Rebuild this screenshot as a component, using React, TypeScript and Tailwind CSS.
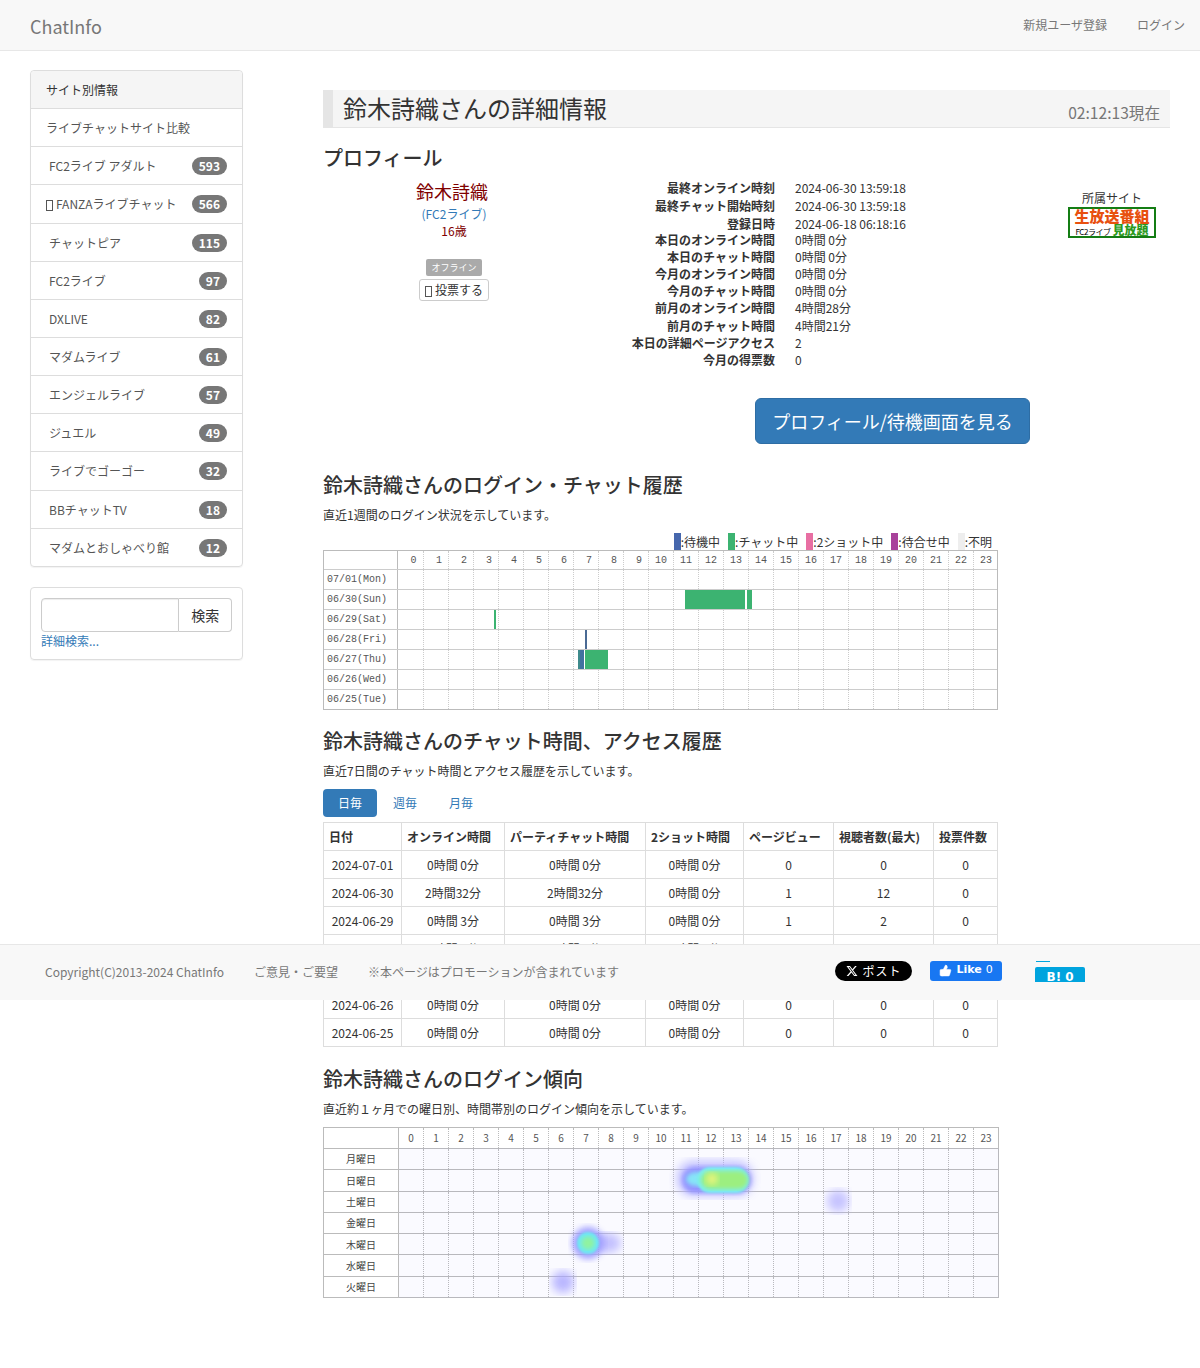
import { FC } from "react";
import { ThumbsUp } from "lucide-react";

const sites = [
  { name: "FC2ライブ アダルト", count: 593, rowClass: "h-[38px] pl-[18px]" },
  { name: "FANZAライブチャット", count: 566, tofu: true, rowClass: "h-[39px] pl-[15px]" },
  { name: "チャットピア", count: 115, rowClass: "h-[38px] pl-[18px]" },
  { name: "FC2ライブ", count: 97, rowClass: "h-[38px] pl-[18px]" },
  { name: "DXLIVE", count: 82, rowClass: "h-[38px] pl-[18px]" },
  { name: "マダムライブ", count: 61, rowClass: "h-[38px] pl-[18px]" },
  { name: "エンジェルライブ", count: 57, rowClass: "h-[38px] pl-[18px]" },
  { name: "ジュエル", count: 49, rowClass: "h-[38px] pl-[18px]" },
  { name: "ライブでゴーゴー", count: 32, rowClass: "h-[39px] pl-[18px]" },
  { name: "BBチャットTV", count: 18, rowClass: "h-[38px] pl-[18px]" },
  { name: "マダムとおしゃべり館", count: 12, rowClass: "h-[37px] pl-[18px]" },
];

const profileRows = [
  ["最終オンライン時刻", "2024-06-30 13:59:18", "h-[18px]"],
  ["最終チャット開始時刻", "2024-06-30 13:59:18", "h-[18px]"],
  ["登録日時", "2024-06-18 06:18:16", "h-[16px]"],
  ["本日のオンライン時間", "0時間 0分", "h-[17px]"],
  ["本日のチャット時間", "0時間 0分", "h-[17px]"],
  ["今月のオンライン時間", "0時間 0分", "h-[17px]"],
  ["今月のチャット時間", "0時間 0分", "h-[17px]"],
  ["前月のオンライン時間", "4時間28分", "h-[18px]"],
  ["前月のチャット時間", "4時間21分", "h-[17px]"],
  ["本日の詳細ページアクセス", "2", "h-[17px]"],
  ["今月の得票数", "0", "h-[17px]"],
];

const hours = Array.from({ length: 24 }, (_, i) => i);

type Bar = { left: number; width: number; color: string };

const historyRows: { label: string; bars: Bar[] }[] = [
  { label: "07/01(Mon)", bars: [] },
  {
    label: "06/30(Sun)",
    bars: [
      { left: 287, width: 60, color: "#3cb371" },
      { left: 349, width: 5, color: "#3cb371" },
    ],
  },
  { label: "06/29(Sat)", bars: [{ left: 96, width: 2, color: "#3cb371" }] },
  { label: "06/28(Fri)", bars: [{ left: 187, width: 2, color: "#4a6a94" }] },
  {
    label: "06/27(Thu)",
    bars: [
      { left: 180, width: 2, color: "#3e8a8c" },
      { left: 182, width: 4, color: "#41719f" },
      { left: 187, width: 23, color: "#3cb371" },
    ],
  },
  { label: "06/26(Wed)", bars: [] },
  { label: "06/25(Tue)", bars: [] },
];

const legend = [
  { label: ":待機中", color: "bg-[#4667ad]" },
  { label: ":チャット中", color: "bg-[#3cb371]" },
  { label: ":2ショット中", color: "bg-[#e86fa3]" },
  { label: ":待合せ中", color: "bg-[#a8429a]" },
  { label: ":不明", color: "bg-[#eeeeee]" },
];

const stats = [
  ["2024-07-01", "0時間 0分", "0時間 0分", "0時間 0分", "0", "0", "0"],
  ["2024-06-30", "2時間32分", "2時間32分", "0時間 0分", "1", "12", "0"],
  ["2024-06-29", "0時間 3分", "0時間 3分", "0時間 0分", "1", "2", "0"],
  ["2024-06-28", "0時間 1分", "0時間 0分", "0時間 0分", "0", "0", "0"],
  ["2024-06-27", "0時間 46分", "0時間 37分", "0時間 0分", "1", "3", "0"],
  ["2024-06-26", "0時間 0分", "0時間 0分", "0時間 0分", "0", "0", "0"],
  ["2024-06-25", "0時間 0分", "0時間 0分", "0時間 0分", "0", "0", "0"],
];

const statHead = ["日付", "オンライン時間", "パーティチャット時間", "2ショット時間", "ページビュー", "視聴者数(最大)", "投票件数"];
const statCols = ["w-[78px]", "w-[103px]", "w-[141px]", "w-[98px]", "w-[90px]", "w-[100px]", "w-[64px]"];

const weekdays = ["月曜日", "日曜日", "土曜日", "金曜日", "木曜日", "水曜日", "火曜日"];

const Tofu: FC<{ className?: string }> = ({ className }) => (
  <span className={`inline-block w-[7px] h-[11px] border border-[#555] align-[-2px] ${className ?? ""}`} />
);

const Sidebar: FC = () => (
  <aside className="w-[213px] shrink-0">
    <div className="border border-[#ddd] rounded shadow-[0_1px_1px_rgba(0,0,0,0.05)]">
      <div className="h-[38px] flex items-center px-[15px] bg-[#f5f5f5] text-[#333] rounded-t border-b border-[#ddd]">
        サイト別情報
      </div>
      <div className="h-[38px] flex items-center pl-[15px] text-[#555] border-b border-[#ddd]">ライブチャットサイト比較</div>
      {sites.map((s, i) => (
        <div
          key={s.name}
          className={`flex items-center justify-between pr-[15px] text-[#555] ${s.rowClass} ${
            i < sites.length - 1 ? "border-b border-[#ddd]" : ""
          }`}
        >
          <span>
            {s.tofu && <Tofu className="mr-[3px]" />}
            {s.name}
          </span>
          <span className="bg-[#777] text-white font-bold rounded-[10px] px-[7px] h-[18px] leading-[18px]">{s.count}</span>
        </div>
      ))}
    </div>
    <div className="mt-5 h-[73px] border border-[#ddd] rounded px-[10px] pt-[10px] shadow-[0_1px_1px_rgba(0,0,0,0.05)]">
      <div className="flex h-[34px]">
        <input className="w-[139px] border border-[#ccc] rounded-l shadow-[inset_0_1px_1px_rgba(0,0,0,0.075)]" />
        <button className="w-[53px] border border-l-0 border-[#ccc] rounded-r text-sm text-[#333]">検索</button>
      </div>
      <a className="block mt-[1px] text-[#337ab7]">詳細検索...</a>
    </div>
  </aside>
);

const Heading: FC<{ title: string; className?: string }> = ({ title, className }) => (
  <h3 className={`text-[20px] leading-[22px] font-medium text-[#333] ${className ?? ""}`}>{title}</h3>
);

const Profile: FC = () => (
  <div className="flex h-[221px] mt-[8px]">
    <div className="w-[262px] shrink-0 flex flex-col items-center pt-[1px]">
      <div className="text-[18px] leading-[26px] text-[#800000] -ml-[4px]">鈴木詩織</div>
      <div className="mt-[1px] leading-[17px] text-[#337ab7]">(FC2ライブ)</div>
      <div className="leading-[17px] text-[#800000]">16歳</div>
      <span className="mt-[20px] h-[17px] w-[56px] rounded-[2px] bg-[#aaa] text-white text-[9px] leading-[17px] text-center">オフライン</span>
      <button className="mt-[3px] w-[70px] h-[22px] border border-[#ccc] rounded-[3px] text-[#333]">
        <Tofu className="mr-[3px]" />
        投票する
      </button>
    </div>
    <div className="w-[190px] shrink-0 pt-[3px]">
      {profileRows.map(([k, , h]) => (
        <div key={k} className={`text-right font-bold text-[#333] whitespace-nowrap ${h}`}>
          {k}
        </div>
      ))}
    </div>
    <div className="w-[293px] shrink-0 pl-[20px] pt-[3px] text-[#333]">
      {profileRows.map(([k, v, h]) => (
        <div key={k} className={h}>
          {v}
        </div>
      ))}
    </div>
    <div className="w-[88px] pt-[12px] text-center">
      <div className="leading-[18px] text-[#333]">所属サイト</div>
      <div className="h-[31px] border-2 border-[#147d14] flex flex-col items-center justify-center bg-white">
        <div className="text-[15px] leading-[16px] font-black text-[#e8500f]">生放送番組</div>
        <div className="flex items-baseline leading-[11px]">
          <span className="text-[8px] text-black tracking-[-0.5px] mr-[2px]">FC2ライブ</span>
          <span className="text-[12px] font-black text-[#2d9a1e]">見放題</span>
        </div>
      </div>
    </div>
  </div>
);

const HistoryChart: FC = () => (
  <div className="w-[675px] border border-[#bbb] font-['Liberation_Mono',monospace] text-[10px] text-[#555]">
    <div className="flex h-[18px]">
      <div className="w-[74px] shrink-0 border-r border-[#bbb]" />
      {hours.map((h) => (
        <div key={h} className={`w-[25px] shrink-0 text-center leading-[20px] ${h ? "border-l border-dotted border-[#ccc]" : ""}`}>
          {h < 10 ? `\u00a0${h}` : h}
        </div>
      ))}
    </div>
    {historyRows.map((r) => (
      <div key={r.label} className="flex h-5 border-t border-[#ccc]">
        <div className="w-[74px] shrink-0 pl-[3px] leading-[19px] border-r border-[#bbb]">{r.label}</div>
        <div className="relative flex flex-1">
          {hours.map((h) => (
            <div key={h} className={`w-[25px] shrink-0 ${h ? "border-l border-dotted border-[#ccc]" : ""}`} />
          ))}
          {r.bars.map((b) => (
            <div key={b.left} className="absolute top-0 bottom-0" style={{ left: b.left, width: b.width, background: b.color }} />
          ))}
        </div>
      </div>
    ))}
  </div>
);

const StatsTable: FC = () => (
  <table className="w-[674px] table-fixed border-collapse text-[#333]">
    <colgroup>
      {statCols.map((c) => (
        <col key={c} className={c} />
      ))}
    </colgroup>
    <thead>
      <tr className="h-[28px]">
        {statHead.map((h) => (
          <th key={h} className="border border-[#ddd] px-[5px] font-bold text-left whitespace-nowrap">
            {h}
          </th>
        ))}
      </tr>
    </thead>
    <tbody>
      {stats.map((row) => (
        <tr key={row[0]} className="h-[28px]">
          {row.map((c, i) => (
            <td key={i} className="border border-[#ddd] text-center">
              {c}
            </td>
          ))}
        </tr>
      ))}
    </tbody>
  </table>
);

const TrendChart: FC = () => (
  <div className="w-[676px] h-[171px] flex flex-col border border-[#bbb] text-[10px] text-[#555]">
    <div className="flex h-5 shrink-0">
      <div className="w-[75px] shrink-0 border-r border-[#bbb]" />
      {hours.map((h) => (
        <div
          key={h}
          className={`shrink-0 text-center leading-[20px] ${h ? "w-[25px] border-l border-dotted border-[#bbb]" : "w-[24px]"}`}
        >
          {h}
        </div>
      ))}
    </div>
    <div className="relative flex-1 flex flex-col">
      {weekdays.map((d) => (
        <div key={d} className="flex-1 flex border-t border-[#bbb]">
          <div className="w-[75px] shrink-0 flex items-center justify-center border-r border-[#bbb] text-[#444]">{d}</div>
          {hours.map((h) => (
            <div key={h} className={`shrink-0 ${h ? "w-[25px] border-l border-dotted border-[#bbb]" : "w-[24px]"}`} />
          ))}
        </div>
      ))}
      {/* heat blobs over the grid */}
      <svg className="absolute left-[75px] top-0 pointer-events-none" width="600" height="150" viewBox="0 0 600 150">
        <defs>
          <filter id="b1"><feGaussianBlur stdDeviation="1.2" /></filter>
          <filter id="b2"><feGaussianBlur stdDeviation="2" /></filter>
          <filter id="b3"><feGaussianBlur stdDeviation="3" /></filter>
          <filter id="b5"><feGaussianBlur stdDeviation="5" /></filter>
        </defs>
        <rect x="0" y="0" width="600" height="150" fill="#7070ff" opacity="0.035" />
        {/* 日曜 11-13 */}
        <rect x="278" y="13" width="76" height="35" rx="16" fill="#b4b2ff" opacity="0.8" filter="url(#b5)" />
        <rect x="283" y="19" width="69" height="26" rx="13" fill="#8c8cff" opacity="0.85" filter="url(#b2)" />
        <ellipse cx="298" cy="31" rx="11" ry="7" fill="#86e4f8" filter="url(#b2)" />
        <rect x="298" y="19" width="52" height="26" rx="13" fill="#7ceef0" filter="url(#b1)" />
        <rect x="302" y="23" width="47" height="18" rx="9" fill="#9cef80" filter="url(#b2)" />
        <circle cx="313" cy="31" r="6" fill="#e6f47c" filter="url(#b3)" />
        {/* 土曜 17 */}
        <circle cx="439" cy="53" r="11" fill="#b4b0ff" opacity="0.75" filter="url(#b5)" />
        {/* 木曜 7-8 */}
        <ellipse cx="208" cy="95" rx="14" ry="10" fill="#b4b0ff" opacity="0.8" filter="url(#b5)" />
        <circle cx="189" cy="95" r="16" fill="#9a98ff" opacity="0.9" filter="url(#b3)" />
        <circle cx="189" cy="95" r="11" fill="#70e8f0" filter="url(#b1)" />
        <circle cx="189" cy="95" r="6.500" fill="#90f3a0" filter="url(#b2)" />
        {/* 火曜 6 */}
        <circle cx="164" cy="134" r="11" fill="#a8a4ff" opacity="0.8" filter="url(#b5)" />
      </svg>
    </div>
  </div>
);

const Footer: FC = () => (
  <footer className="absolute left-0 right-0 top-[944px] h-[56px] flex items-center pb-[2px] bg-[#f8f8f8] border-t border-[#e7e7e7] text-[#777]">
    <span className="ml-[45px]">Copyright(C)2013-2024 ChatInfo</span>
    <span className="ml-[30px]">ご意見・ご要望</span>
    <span className="ml-[30px]">※本ページはプロモーションが含まれています</span>
    <div className="ml-[216px] -mt-[1px] w-[77px] h-5 rounded-full bg-black text-white flex items-center justify-center gap-[5px] tracking-[1px]">
      <svg width="12" height="12" viewBox="0 0 24 24" fill="currentColor">
        <path d="M18.2 2h3.400l-7.400 8.500L23 22h-6.800l-5.300-7-6.100 7H1.300l7.900-9.100L1 2h7l4.800 6.400zm-1.200 18h1.900L7 3.900H5z" />
      </svg>
      ポスト
    </div>
    <div className="ml-[18px] -mt-[2px] w-[72px] h-5 rounded-[3px] bg-[#1877f2] text-white flex items-center justify-center gap-[4px] text-[11px] font-['DejaVu_Sans',sans-serif]">
      <ThumbsUp size={13} fill="currentColor" strokeWidth={1} />
      <span className="font-bold">Like</span>
      <span>0</span>
    </div>
    <div className="relative ml-[33px] mt-[1px] w-[50px] h-[22px]">
      <div className="absolute left-[1px] top-0 w-[14px] h-px bg-[#00a4de]" />
      <div className="absolute left-0 right-0 top-[6px] h-[15px] rounded-t-[2px] bg-[#00a4de] overflow-hidden text-center text-white font-bold text-[12px] leading-[20px] font-['DejaVu_Sans',sans-serif]">
        B! 0
      </div>
    </div>
  </footer>
);

export default function App() {
  return (
    <div className="relative min-h-[1368px] bg-white text-xs font-['Noto_Sans_CJK_JP',sans-serif]">
      <nav className="h-[51px] flex items-center justify-between bg-[#f8f8f8] border-b border-[#e7e7e7] text-[#777]">
        <span className="ml-[30px] mt-[1px] text-[18px]">ChatInfo</span>
        <div className="flex gap-[30px] mr-[15px]">
          <span>新規ユーザ登録</span>
          <span>ログイン</span>
        </div>
      </nav>
      <div className="flex pl-[30px] pt-[19px]">
        <Sidebar />
        <main className="ml-[80px] w-[847px] pt-5">
          <div className="h-[38px] flex items-end justify-between bg-[#f5f5f5] border-l-[10px] border-b border-[#e5e5e5] pl-[10px] pr-[10px]">
            <h1 className="text-[24px] leading-[38px] text-[#333]">鈴木詩織さんの詳細情報</h1>
            <span className="text-[15.6px] leading-[30px] text-[#777]">02:12:13現在</span>
          </div>
          <Heading title="プロフィール" className="mt-[19px]" />
          <Profile />
          <div className="ml-[432px] w-[275px] h-[46px] rounded-md bg-[#337ab7] border border-[#2e6da4] text-white text-[18px] flex items-center justify-center">
            プロフィール/待機画面を見る
          </div>
          <Heading title="鈴木詩織さんのログイン・チャット履歴" className="mt-[30px]" />
          <p className="mt-[10px] leading-[17px] text-[#333]">直近1週間のログイン状況を示しています。</p>
          <div className="w-[669px] mt-[10px] h-[17px] flex justify-end gap-[8px] text-[#333] leading-[18px]">
            {legend.map((l) => (
              <span key={l.label} className="flex">
                <i className={`block w-[7px] h-[17px] ${l.color}`} />
                {l.label}
              </span>
            ))}
          </div>
          <HistoryChart />
          <Heading title="鈴木詩織さんのチャット時間、アクセス履歴" className="mt-[20px]" />
          <p className="mt-[10px] leading-[17px] text-[#333]">直近7日間のチャット時間とアクセス履歴を示しています。</p>
          <div className="mt-[10px] flex h-[28px] leading-[28px]">
            <span className="w-[54px] rounded bg-[#337ab7] text-white text-center">日毎</span>
            <span className="ml-[16px] text-[#337ab7]">週毎</span>
            <span className="ml-[32px] text-[#337ab7]">月毎</span>
          </div>
          <div className="mt-[5px]">
            <StatsTable />
          </div>
          <Heading title="鈴木詩織さんのログイン傾向" className="mt-[21px]" />
          <p className="mt-[10px] leading-[17px] text-[#333]">直近約１ヶ月での曜日別、時間帯別のログイン傾向を示しています。</p>
          <div className="mt-[10px]">
            <TrendChart />
          </div>
        </main>
      </div>
      <Footer />
    </div>
  );
}
